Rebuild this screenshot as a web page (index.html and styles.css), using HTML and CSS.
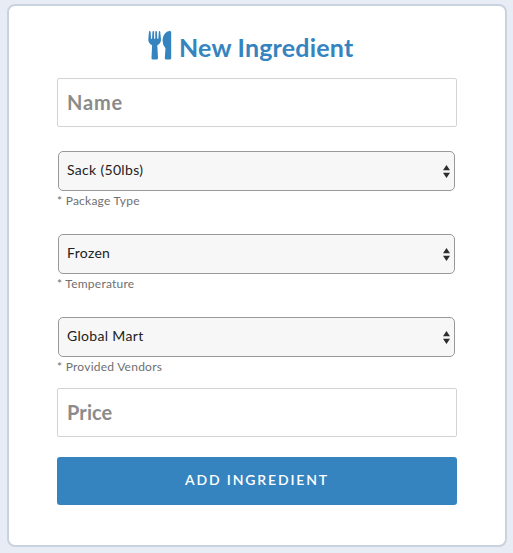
FILE: index.html
```html
<!DOCTYPE html>
<html lang="en">
<head>
<meta charset="utf-8">
<title>New Ingredient</title>
<link rel="stylesheet" href="styles.css">
</head>
<body>
<form class="card">
  <h1 class="title">
    <svg class="title-icon" viewBox="0 0 24 29" aria-hidden="true">
      <path d="M1 .5Q1.2 0 1.8 0T2.6.7L3 7.3Q3.1 8 3.6 8T4.1 7.3L4.5.7Q4.6 0 5.3 0T6.1.7V7.3Q6.2 8 6.7 8T7.3 7.3V.7Q7.4 0 8.1 0T8.9.7L9.3 7.3Q9.4 8 9.9 8T10.4 7.3L10.8.7Q10.9 0 11.5 0T12.2.7L13 8.2Q13.1 12.2 9.3 14.2L10 27Q10 28.6 8.4 28.6H5Q3.4 28.6 3.5 27L4.1 14.2Q.2 12.2.3 8.2Z"/>
      <path d="M21.7 0Q23.2 0 23.2 1.3V27Q23.2 28.6 21.7 28.6H18.3Q16.7 28.6 16.8 27L17.5 17.2Q14.6 14.3 14.6 9.8C14.6 4.5 17.8 0 21.7 0Z"/>
    </svg>
    <span class="title-text">New Ingredient</span>
  </h1>
  <input class="input input-name" type="text" placeholder="Name">
  <div class="field">
    <div class="select-wrap">
      <select class="select"><option>Sack (50lbs)</option></select>
      <svg class="arrows" viewBox="0 0 7 13" aria-hidden="true"><path d="M0 5.3 3.5 0 7 5.3ZM0 7.7H7L3.5 13Z"/></svg>
    </div>
    <div class="hint">* Package Type</div>
  </div>
  <div class="field">
    <div class="select-wrap">
      <select class="select"><option>Frozen</option></select>
      <svg class="arrows" viewBox="0 0 7 13" aria-hidden="true"><path d="M0 5.3 3.5 0 7 5.3ZM0 7.7H7L3.5 13Z"/></svg>
    </div>
    <div class="hint">* Temperature</div>
  </div>
  <div class="field">
    <div class="select-wrap">
      <select class="select"><option>Global Mart</option></select>
      <svg class="arrows" viewBox="0 0 7 13" aria-hidden="true"><path d="M0 5.3 3.5 0 7 5.3ZM0 7.7H7L3.5 13Z"/></svg>
    </div>
    <div class="hint hint-vendor">* Provided Vendors</div>
  </div>
  <input class="input input-price" type="text" placeholder="Price">
  <button class="submit" type="button">Add Ingredient</button>
</form>
</body>
</html>
```
FILE: styles.css
```css
* {
  box-sizing: border-box;
}

body {
  margin: 0;
  padding: 4px 6px 6px 7px;
  height: 553px;
  overflow: hidden;
  background: #e8edf5;
  font-family: Lato, "Open Sans", sans-serif;
}

.card {
  display: flex;
  flex-direction: column;
  height: 543px;
  padding: 25px 48px 0;
  background: #fff;
  border: 2px solid #c9d3df;
  border-radius: 8px;
}

.title {
  display: flex;
  margin: 0 0 18px 91px;
  height: 29px;
  color: #3584c0;
  font-size: 25px;
  font-weight: 700;
  letter-spacing: 0.2px;
  line-height: 32px;
  white-space: nowrap;
}

.title-icon {
  width: 24px;
  height: 29px;
  margin-right: 7px;
  fill: currentColor;
}

.input {
  width: 400px;
  height: 49px;
  margin: 0;
  padding: 0 9px 2px;
  border: 1px solid #d3d3d3;
  border-radius: 2px;
  background: #fff;
  color: #222;
  font: 700 20px Lato, "Open Sans", sans-serif;
  outline: 0;
}

.input::placeholder {
  color: #8b8b8b;
  opacity: 1;
}

.input-name {
  margin-bottom: 24px;
  letter-spacing: 0.8px;
}

.input-price {
  margin-bottom: 20px;
  letter-spacing: 0.1px;
}

.field {
  height: 83px;
}

.field:last-of-type {
  height: 71px;
}

.select-wrap {
  position: relative;
  width: 397px;
  height: 40px;
  margin-left: 1px;
}

.select {
  appearance: none;
  display: block;
  width: 100%;
  height: 100%;
  margin: 0;
  padding: 0 24px 3px 8px;
  border: 1px solid #999;
  border-radius: 5px;
  background: #f7f7f7;
  color: #222;
  font: 400 14px Lato, "Open Sans", sans-serif;
  letter-spacing: 0.32px;
}

.arrows {
  position: absolute;
  top: 14px;
  right: 5px;
  width: 7px;
  height: 13px;
  fill: #2d2d2d;
}

.hint {
  color: #6f6f6f;
  font-size: 12px;
  line-height: 20px;
  letter-spacing: 0.24px;
}

.submit {
  width: 400px;
  height: 48px;
  padding: 0 0 3px;
  border: 0;
  border-radius: 3px;
  background: #3584c0;
  color: #fff;
  font: 600 14px Lato, "Open Sans", sans-serif;
  letter-spacing: 1.85px;
  text-transform: uppercase;
}
```
